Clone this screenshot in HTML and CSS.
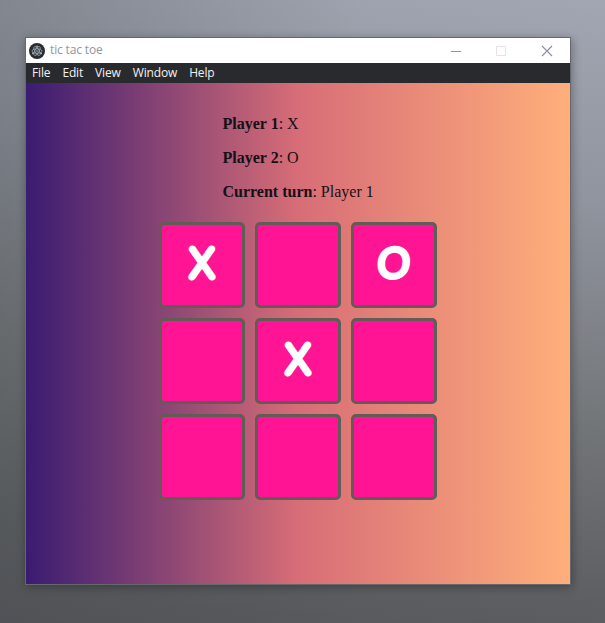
FILE: index.html
```html
<!DOCTYPE html>
<html lang="en">
<head>
<meta charset="utf-8">
<title>tic tac toe</title>
<link rel="stylesheet" href="styles.css">
</head>
<body>
<main class="window">
  <header class="titlebar">
    <svg class="logo" viewBox="0 0 16 16"><circle cx="8" cy="8" r="8" fill="#292b31"/><g fill="none" stroke="#a3b0b8" stroke-width=".75"><ellipse cx="8" cy="8" rx="5" ry="2.1"/><ellipse cx="8" cy="8" rx="5" ry="2.1" transform="rotate(60 8 8)"/><ellipse cx="8" cy="8" rx="5" ry="2.1" transform="rotate(120 8 8)"/></g><g fill="#b8c4ca"><circle cx="8" cy="8" r=".8"/><circle cx="3.8" cy="10.4" r=".8"/><circle cx="12.2" cy="10.4" r=".8"/><circle cx="8" cy="3.2" r=".8"/></g></svg>
    <span class="title">tic tac toe</span>
    <div class="controls">
      <svg viewBox="0 0 10 10"><path d="M0 5.5H10" stroke="#8f939f"/></svg>
      <svg viewBox="0 0 10 10"><path d="M.5.5h9v9h-9z" stroke="#e9dfe5"/></svg>
      <svg viewBox="0 0 10 10"><path d="M0 0L10 10M10 0L0 10" stroke="#8b8e99" stroke-width="1.1"/></svg>
    </div>
  </header>
  <nav class="menu"><span>File</span><span>Edit</span><span>View</span><span>Window</span><span>Help</span></nav>
  <section class="game">
    <div class="info">
      <p><b>Player 1</b>: X</p>
      <p><b>Player 2</b>: O</p>
      <p><b>Current turn</b>: Player 1</p>
    </div>
    <div class="board">
      <div class="cell"><svg class="mark" viewBox="0 0 80 80"><text class="x" x="40" y="52">X</text></svg></div>
      <div class="cell"></div>
      <div class="cell"><svg class="mark" viewBox="0 0 80 80"><text class="o" x="40" y="52">O</text></svg></div>
      <div class="cell"></div>
      <div class="cell"><svg class="mark" viewBox="0 0 80 80"><text class="x" x="40" y="52">X</text></svg></div>
      <div class="cell"></div>
      <div class="cell"></div>
      <div class="cell"></div>
      <div class="cell"></div>
    </div>
  </section>
</main>
</body>
</html>
```
FILE: styles.css
```css
* { box-sizing: border-box; }
body {
  margin: 0;
  height: 623px;
  padding: 37px 34px 38px 25px;
  overflow: hidden;
  background:
    linear-gradient(to right, rgba(66, 72, 76, .28), rgba(66, 72, 76, 0) 60%),
    linear-gradient(188deg, #a2a6b2 0%, #90949e 29%, #737679 60%, #5d5f62 85%, #55565a 100%);
}
.window {
  width: 546px;
  height: 548px;
  border: 1px solid #66686b;
  box-shadow: 1px 2px 9px rgba(0, 0, 0, .32);
}
.titlebar {
  height: 25px;
  display: flex;
  align-items: center;
  padding: 0 19px 0 3px;
  background: #fff;
  color: #92969e;
  font: 12px/25px "Open Sans", sans-serif;
}
.logo { width: 16px; height: 16px; }
.title { margin-left: 5px; letter-spacing: -.15px; transform: translateY(-1px); }
.controls { margin-left: auto; display: flex; gap: 35px; }
.controls svg { width: 10px; height: 10px; fill: none; overflow: visible; }
.controls svg:last-child { transform: translateX(1px); }
.menu {
  height: 20px;
  display: flex;
  gap: 12px;
  padding-left: 6px;
  background: #292a2d;
  color: #f1f1f1;
  font: 12px/20px "Open Sans", sans-serif;
  letter-spacing: -.15px;
}
.game {
  height: 501px;
  padding-top: 32px;
  background: linear-gradient(to right, #3a1c71, #d76d77, #ffaf7b);
}
.info {
  width: 151px;
  margin: 0 auto;
  color: #151018;
  font: 16px/18px "Liberation Serif", serif;
  white-space: nowrap;
}
.info p { margin: 0 0 16px; }
.board {
  display: grid;
  grid-template-columns: repeat(3, 86px);
  grid-auto-rows: 86px;
  gap: 10px;
  width: 278px;
  margin: 21px auto 0;
}
.cell {
  border: 3px solid #635b58;
  border-radius: 5px;
  background: #ff1493;
}
.mark { display: block; width: 80px; height: 80px; }
.mark text {
  font-family: Lato, sans-serif;
  font-weight: 300;
  font-size: 40px;
  text-anchor: middle;
  fill: #fff;
  stroke: #fff;
  stroke-linejoin: round;
}
.mark .x { font-weight: 100; font-size: 39px; stroke-width: 6.8px; transform: scaleX(.98); transform-origin: 40px 37px; }
.mark .o { stroke-width: 5.4px; transform: skewX(-4deg); transform-origin: 40px 37px; }
```
